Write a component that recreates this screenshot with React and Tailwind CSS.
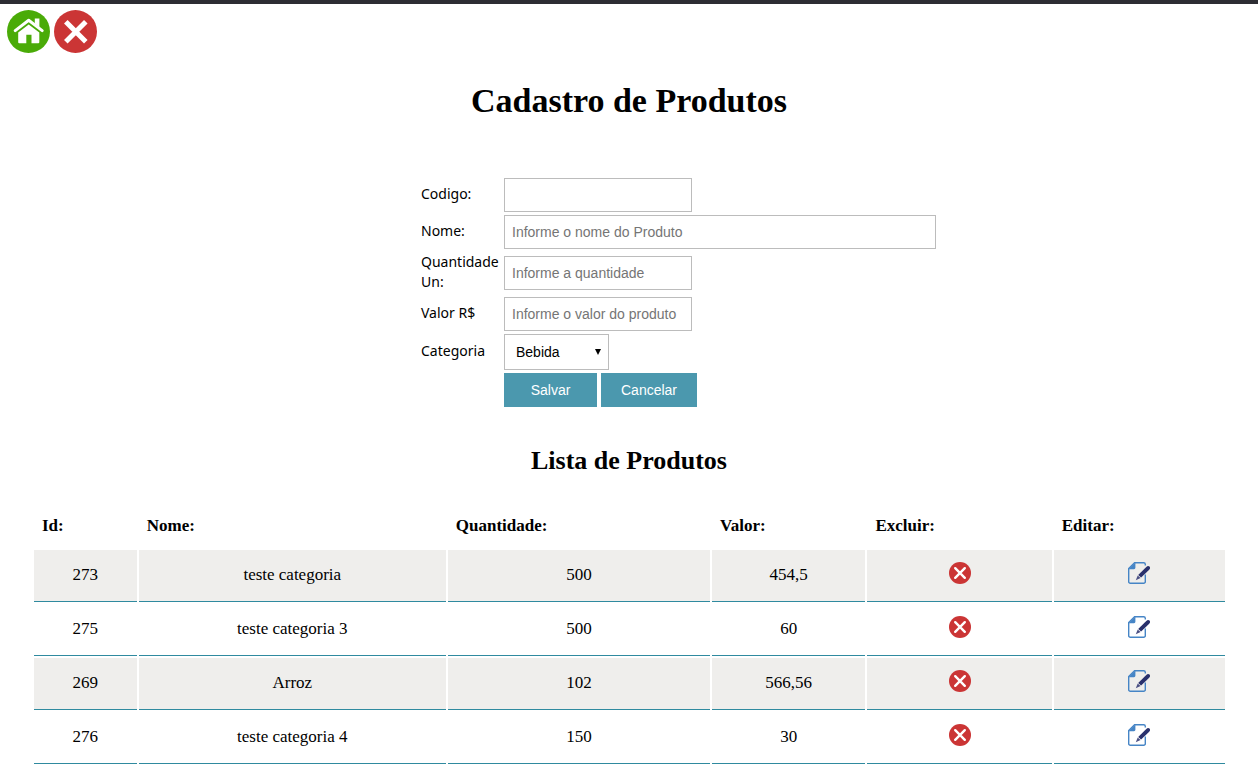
import React from "react";

const products = [
  { id: 273, name: "teste categoria", quantity: 500, price: "454,5" },
  { id: 275, name: "teste categoria 3", quantity: 500, price: "60" },
  { id: 269, name: "Arroz", quantity: 102, price: "566,56" },
  { id: 276, name: "teste categoria 4", quantity: 150, price: "30" },
];

const labelClass =
  "self-center pb-[2px] font-['Noto_Sans',sans-serif] text-[14px] leading-[20px]";
const fieldClass =
  "h-[34px] self-center rounded-none border border-[#bcbcbc] bg-white px-[7px] font-['Liberation_Sans',Arial,sans-serif] text-[14px] text-black placeholder:text-[#757575]";
const buttonClass =
  "h-[34px] cursor-pointer bg-[#4b98ae] text-center font-['Liberation_Sans',Arial,sans-serif] text-[14px] text-white";
const headClass = "h-[46px] px-[8px] pt-[1px] pb-0";
const cellClass =
  "h-[52px] border-b border-[#2f8a9f] px-0 pt-0 pb-[2px] text-center align-middle";

function HomeIcon() {
  return (
    <svg viewBox="0 0 43 43" className="block size-[43px]" aria-hidden="true">
      <circle cx="21.5" cy="21.5" r="21.5" fill="#4aab08" />
      <path
        d="M8.2 20.6 21.7 10.2 35.2 20.6"
        fill="none"
        stroke="#fff"
        strokeWidth="3"
        strokeLinecap="round"
        strokeLinejoin="round"
      />
      <path d="M27.8 8.4h4.6v9l-4.6-3.8z" fill="#fff" />
      <path
        d="M11.2 22.4 21.7 14.4 32.3 22.4V32.2a1 1 0 0 1-1 1H24.5V24.8H19.3V33.2H12.2a1 1 0 0 1-1-1z"
        fill="#fff"
      />
    </svg>
  );
}

function CloseIcon() {
  return (
    <svg viewBox="0 0 43 43" className="block size-[43px]" aria-hidden="true">
      <circle cx="21.5" cy="21.5" r="21.5" fill="#cb3535" />
      <path d="M11.8 11.8 31.8 31.8M31.8 11.8 11.8 31.8" stroke="#fff" strokeWidth="5" />
    </svg>
  );
}

function DeleteIcon() {
  return (
    <svg viewBox="0 0 22 22" className="block size-[22px]" aria-hidden="true">
      <circle cx="11" cy="11" r="11" fill="#cb3535" />
      <path
        d="M6.2 6.2 15.8 15.8M15.8 6.2 6.2 15.8"
        stroke="#fff"
        strokeWidth="2.4"
        strokeLinecap="round"
      />
    </svg>
  );
}

function EditIcon() {
  return (
    <svg viewBox="0 0 22 22" className="block size-[22px]" aria-hidden="true">
      <path
        d="M17.3 3.6V2.2A1.6 1.6 0 0 0 15.7.7H6.6L.7 6.6V19.7A1.6 1.6 0 0 0 2.3 21.3H15.7A1.6 1.6 0 0 0 17.3 19.7V12.6"
        fill="none"
        stroke="#4685c6"
        strokeWidth="1.4"
      />
      <path d="M7.4.4V5.8A1.4 1.4 0 0 1 6 7.2H.4z" fill="#4685c6" />
      <path
        d="M10.2 12.9 18.3 4.9Q20 3.3 21.5 4.5 22.8 6.1 21.2 7.7L13.1 15.6z"
        fill="#29306c"
      />
      <path d="M9.7 13.4 12.6 16.1 7.8 18.2z" fill="#4b5084" />
    </svg>
  );
}

export default function App() {
  return (
    <div className="border-t-4 border-[#2d2d33] bg-white font-['Liberation_Serif','Times_New_Roman',serif] text-[17px] text-black">
      <nav className="flex gap-[4px] px-[7px] pt-[6px]">
        <a href="#inicio" aria-label="Início">
          <HomeIcon />
        </a>
        <a href="#sair" aria-label="Sair">
          <CloseIcon />
        </a>
      </nav>

      <main>
        <h1 className="mt-[27px] text-center text-[34px] leading-[42px] font-bold">
          Cadastro de Produtos
        </h1>

        <form
          className="mx-auto mt-[56px] grid w-fit grid-cols-[79px_432px] gap-x-[4px] gap-y-[3px] pl-[99px]"
          onSubmit={(event) => event.preventDefault()}
        >
          <label htmlFor="codigo" className={labelClass}>Codigo:</label>
          <input id="codigo" type="text" readOnly className={`${fieldClass} w-[188px]`} />

          <label htmlFor="nome" className={labelClass}>Nome:</label>
          <input
            id="nome"
            type="text"
            placeholder="Informe o nome do Produto"
            className={`${fieldClass} w-full`}
          />

          <label htmlFor="quantidade" className={labelClass}>Quantidade Un:</label>
          <input
            id="quantidade"
            type="text"
            placeholder="Informe a quantidade"
            className={`${fieldClass} w-[188px]`}
          />

          <label htmlFor="valor" className={labelClass}>Valor R$</label>
          <input
            id="valor"
            type="text"
            placeholder="Informe o valor do produto"
            className={`${fieldClass} w-[188px]`}
          />

          <label htmlFor="categoria" className={labelClass}>Categoria</label>
          <div className="relative w-[105px]">
            <select
              id="categoria"
              className="block h-[36px] w-full appearance-none border border-[#bcbcbc] bg-white px-[11px] font-['Liberation_Sans',Arial,sans-serif] text-[14px] text-black"
            >
              <option>Bebida</option>
            </select>
            <svg
              viewBox="0 0 6 6"
              className="pointer-events-none absolute top-[15px] right-[8px] size-[6px]"
              aria-hidden="true"
            >
              <path d="M0 0h6L3 6z" fill="#000" />
            </svg>
          </div>

          <div className="col-start-2 flex gap-[4px]">
            <button type="submit" className={`${buttonClass} w-[93px]`}>Salvar</button>
            <button type="reset" className={`${buttonClass} w-[96px]`}>Cancelar</button>
          </div>
        </form>

        <h2 className="mt-[39px] text-center text-[26px] leading-[30px] font-bold">
          Lista de Produtos
        </h2>

        <div className="pr-[31px] pl-[32px]">
          <table className="mt-[24px] w-full table-fixed border-separate border-spacing-[2px]">
            <colgroup>
              <col className="w-[8.7%]" />
              <col className="w-[26%]" />
              <col className="w-[22.2%]" />
              <col className="w-[13%]" />
              <col className="w-[15.6%]" />
              <col className="w-[14.5%]" />
            </colgroup>
            <thead>
              <tr className="text-left">
                <th className={headClass}>Id:</th>
                <th className={headClass}>Nome:</th>
                <th className={headClass}>Quantidade:</th>
                <th className={headClass}>Valor:</th>
                <th className={headClass}>Excluir:</th>
                <th className={headClass}>Editar:</th>
              </tr>
            </thead>
            <tbody>
              {products.map((product) => (
                <tr key={product.id} className="odd:[&>td]:bg-[#efeeec]">
                  <td className={cellClass}>{product.id}</td>
                  <td className={cellClass}>{product.name}</td>
                  <td className={cellClass}>{product.quantity}</td>
                  <td className={cellClass}>{product.price}</td>
                  <td className={cellClass}>
                    <button
                      type="button"
                      aria-label={`Excluir ${product.name}`}
                      className="mx-auto block cursor-pointer pb-[4px]"
                    >
                      <DeleteIcon />
                    </button>
                  </td>
                  <td className={cellClass}>
                    <button
                      type="button"
                      aria-label={`Editar ${product.name}`}
                      className="mx-auto block cursor-pointer pb-[4px]"
                    >
                      <EditIcon />
                    </button>
                  </td>
                </tr>
              ))}
            </tbody>
          </table>
        </div>
      </main>
    </div>
  );
}
